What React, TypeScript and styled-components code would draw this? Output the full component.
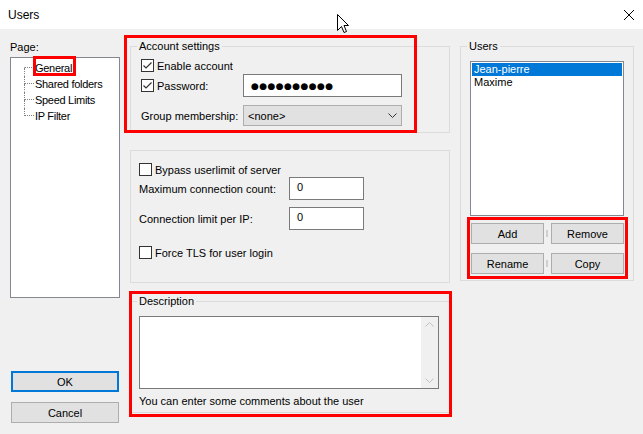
import styled, { createGlobalStyle } from "styled-components";

const GlobalStyle = createGlobalStyle`
  html, body {
    margin: 0;
    padding: 0;
    background: #f0f0f0;
  }
  body {
    font-family: "Liberation Sans", Arial, sans-serif;
    font-size: 11px;
    color: #000;
  }
  * { box-sizing: border-box; }
`;

const Window = styled.div`
  position: relative;
  width: 643px;
  height: 434px;
  overflow: hidden;
  background: #f0f0f0;
  display: flex;
  flex-direction: column;
`;

const TitleBar = styled.div`
  flex: none;
  height: 29px;
  background: #fff;
  display: flex;
  align-items: center;
  justify-content: space-between;
  padding: 0 9px 0 8px;
  font-size: 12px;
`;

const Body = styled.div`
  display: grid;
  grid-template-columns: 110px 320px 174px;
  column-gap: 10px;
  padding-left: 10px;
  align-items: start;
`;

const Column = styled.div`
  display: flex;
  flex-direction: column;
`;

const PageLabel = styled.div`
  margin-top: 11px;
  line-height: 15px;
`;

const TreeBox = styled.div`
  margin-top: 2px;
  height: 241px;
  background: #fff;
  border: 1px solid #828790;
  padding: 2px 0 0 13px;
`;

const TreeItem = styled.div`
  display: flex;
  align-items: center;
  height: 16px;
`;

const Connector = styled.span`
  display: flex;
  flex-direction: column;
  width: 10px;
  height: 16px;
  flex: none;
`;

const Half = styled.span<{ $line: boolean; $tick?: boolean }>`
  height: 8px;
  border-left: 1px dotted ${(p) => (p.$line ? "#808080" : "transparent")};
  border-bottom: 1px dotted ${(p) => (p.$tick ? "#808080" : "transparent")};
`;

const TreeLabel = styled.span`
  padding-left: 1px;
  line-height: 16px;
  letter-spacing: -0.3px;
  white-space: nowrap;
`;

const DialogButton = styled.button<{ $default?: boolean }>`
  height: 21px;
  font: inherit;
  color: #000;
  background: #e1e1e1;
  border: ${(p) => (p.$default ? "2px solid #0078d7" : "1px solid #adadad")};
  padding: 0;
`;

const OkButton = styled(DialogButton)`
  margin: 73px 0 0 1px;
  width: 108px;
`;

const CancelButton = styled(DialogButton)`
  margin: 10px 0 0 1px;
  width: 108px;
`;

const Group = styled.fieldset<{ $top: number }>`
  margin: ${(p) => p.$top}px 0 0 0;
  padding: 0;
  border: 1px solid #dcdcdc;
  min-inline-size: auto;
`;

const Legend = styled.legend`
  margin-left: 6px;
  padding: 0 2px;
  line-height: 14px;
`;

const GroupBody = styled.div<{ $pad: string }>`
  padding: ${(p) => p.$pad};
  display: flex;
  flex-direction: column;
`;

const Panel = styled.div`
  margin-top: 17px;
  border: 1px solid #dcdcdc;
  padding: 11px 0 22px 8px;
  display: flex;
  flex-direction: column;
`;

const Row = styled.div<{ $h: number; $mt?: number }>`
  display: flex;
  align-items: center;
  height: ${(p) => p.$h}px;
  margin-top: ${(p) => p.$mt ?? 0}px;
`;

const CheckLabel = styled.label`
  display: flex;
  align-items: center;
  gap: 3px;
  white-space: nowrap;
`;

const Box = styled.span`
  width: 13px;
  height: 13px;
  flex: none;
  background: #fff;
  border: 1px solid #333;
  display: flex;
  align-items: center;
  justify-content: center;
`;

const FieldLabel = styled.span<{ $w: number }>`
  width: ${(p) => p.$w}px;
  flex: none;
  white-space: nowrap;
`;

const TextBox = styled.div<{ $w: number; $h: number }>`
  width: ${(p) => p.$w}px;
  height: ${(p) => p.$h}px;
  background: #fff;
  border: 1px solid #7a7a7a;
  padding: 2px 0 0 7px;
  line-height: 14px;
`;

const Dots = styled.span`
  font-family: "DejaVu Sans", sans-serif;
  font-size: 9px;
  letter-spacing: 0.4px;
  line-height: 18px;
`;

const Select = styled.div`
  width: 159px;
  height: 21px;
  background: #e1e1e1;
  border: 1px solid #adadad;
  display: flex;
  align-items: center;
  justify-content: space-between;
  padding: 0 4px 0 4px;
`;

const MemoBox = styled.div`
  margin-top: 8px;
  width: 300px;
  height: 73px;
  background: #fff;
  border: 1px solid #7a7a7a;
  display: flex;
  justify-content: flex-end;
`;

const ScrollTrack = styled.div`
  width: 17px;
  background: #f0f0f0;
  display: flex;
  flex-direction: column;
  justify-content: space-between;
  align-items: center;
  padding: 5px 0 5px;
`;

const Hint = styled.div`
  margin-top: 5px;
  line-height: 15px;
`;

const ListBox = styled.div`
  margin-top: 8px;
  width: 154px;
  height: 155px;
  background: #fff;
  border: 1px solid #828790;
  padding: 1px;
`;

const ListItem = styled.div<{ $selected?: boolean }>`
  height: 13px;
  line-height: 13px;
  padding-left: 2px;
  background: ${(p) => (p.$selected ? "#0078d7" : "transparent")};
  color: ${(p) => (p.$selected ? "#fff" : "#000")};
`;

const ButtonGrid = styled.div`
  margin: 7px 0 0 1px;
  display: grid;
  grid-template-columns: 73px 73px;
  column-gap: 7px;
  row-gap: 9px;
`;

const ActionButton = styled(DialogButton)`
  position: relative;
  &::after {
    content: "";
    position: absolute;
    right: -5px;
    top: 6px;
    width: 2px;
    height: 7px;
    background: #cfcfcf;
  }
`;

const Annotation = styled.div<{ $x: number; $y: number; $w: number; $h: number }>`
  position: absolute;
  left: ${(p) => p.$x}px;
  top: ${(p) => p.$y}px;
  width: ${(p) => p.$w}px;
  height: ${(p) => p.$h}px;
  border: 3px solid #ff0000;
  pointer-events: none;
`;

const Cursor = styled.svg`
  position: absolute;
  left: 337px;
  top: 14px;
`;

const Check = ({ checked }: { checked?: boolean }) => (
  <Box>
    {checked && (
      <svg width="11" height="11" viewBox="0 0 11 11">
        <path d="M1.5 5.5 L4 8 L9.5 2.5" fill="none" stroke="#333" strokeWidth="1.2" />
      </svg>
    )}
  </Box>
);

const Chevron = ({ up, color }: { up?: boolean; color: string }) => (
  <svg width="9" height="5" viewBox="0 0 9 5">
    <path d={up ? "M0.5 4.5 L4.5 0.5 L8.5 4.5" : "M0.5 0.5 L4.5 4.5 L8.5 0.5"} fill="none" stroke={color} strokeWidth="1" />
  </svg>
);

const pages = ["General", "Shared folders", "Speed Limits", "IP Filter"];
const users = ["Jean-pierre", "Maxime"];

const App = () => {
  return (
    <Window>
      <GlobalStyle />
      <TitleBar>
        <span>Users</span>
        <svg width="10" height="10" viewBox="0 0 10 10">
          <path d="M0 0 L10 10 M10 0 L0 10" stroke="#000" strokeWidth="1" />
        </svg>
      </TitleBar>
      <Body>
        <Column>
          <PageLabel>Page:</PageLabel>
          <TreeBox>
            {pages.map((p, i) => (
              <TreeItem key={p}>
                <Connector>
                  <Half $line={i > 0} $tick />
                  <Half $line={i < pages.length - 1} />
                </Connector>
                <TreeLabel>{p}</TreeLabel>
              </TreeItem>
            ))}
          </TreeBox>
          <OkButton $default>OK</OkButton>
          <CancelButton>Cancel</CancelButton>
        </Column>

        <Column>
          <Group $top={10}>
            <Legend>Account settings</Legend>
            <GroupBody $pad="5px 0 6px 10px">
              <Row $h={15}>
                <CheckLabel>
                  <Check checked />
                  Enable account
                </CheckLabel>
              </Row>
              <Row $h={23} $mt={1}>
                <FieldLabel $w={102}>
                  <CheckLabel>
                    <Check checked />
                    Password:
                  </CheckLabel>
                </FieldLabel>
                <TextBox $w={159} $h={23}>
                  <Dots>●●●●●●●●●●</Dots>
                </TextBox>
              </Row>
              <Row $h={21} $mt={8}>
                <FieldLabel $w={102}>Group membership:</FieldLabel>
                <Select>
                  <span>&lt;none&gt;</span>
                  <Chevron color="#333" />
                </Select>
              </Row>
            </GroupBody>
          </Group>

          <Panel>
            <Row $h={15}>
              <CheckLabel>
                <Check />
                Bypass userlimit of server
              </CheckLabel>
            </Row>
            <Row $h={23}>
              <FieldLabel $w={150}>Maximum connection count:</FieldLabel>
              <TextBox $w={75} $h={23}>0</TextBox>
            </Row>
            <Row $h={23} $mt={7}>
              <FieldLabel $w={150}>Connection limit per IP:</FieldLabel>
              <TextBox $w={75} $h={23}>0</TextBox>
            </Row>
            <Row $h={15} $mt={15}>
              <CheckLabel>
                <Check />
                Force TLS for user login
              </CheckLabel>
            </Row>
          </Panel>

          <Group $top={11}>
            <Legend>Description</Legend>
            <GroupBody $pad="0 0 3px 8px">
              <MemoBox>
                <ScrollTrack>
                  <Chevron up color="#c0c0c0" />
                  <Chevron color="#c0c0c0" />
                </ScrollTrack>
              </MemoBox>
              <Hint>You can enter some comments about the user</Hint>
            </GroupBody>
          </Group>
        </Column>

        <Column>
          <Group $top={10}>
            <Legend>Users</Legend>
            <GroupBody $pad="0 0 6px 9px">
              <ListBox>
                {users.map((u, i) => (
                  <ListItem key={u} $selected={i === 0}>
                    {u}
                  </ListItem>
                ))}
              </ListBox>
              <ButtonGrid>
                <ActionButton>Add</ActionButton>
                <ActionButton>Remove</ActionButton>
                <ActionButton>Rename</ActionButton>
                <ActionButton>Copy</ActionButton>
              </ButtonGrid>
            </GroupBody>
          </Group>
        </Column>
      </Body>

      <Annotation $x={33} $y={56} $w={43} $h={20} />
      <Annotation $x={124} $y={35} $w={293} $h={98} />
      <Annotation $x={467} $y={217} $w={161} $h={62} />
      <Annotation $x={129} $y={291} $w={323} $h={126} />

      <Cursor width="13" height="20" viewBox="0 0 13 20">
        <path d="M0.5 0.5 L0.5 16.5 L4.5 12.5 L7 18.5 L9.5 17.5 L7 11.5 L11.5 11.5 Z" fill="#fff" stroke="#000" strokeWidth="1" />
      </Cursor>
    </Window>
  );
};

export default App;
